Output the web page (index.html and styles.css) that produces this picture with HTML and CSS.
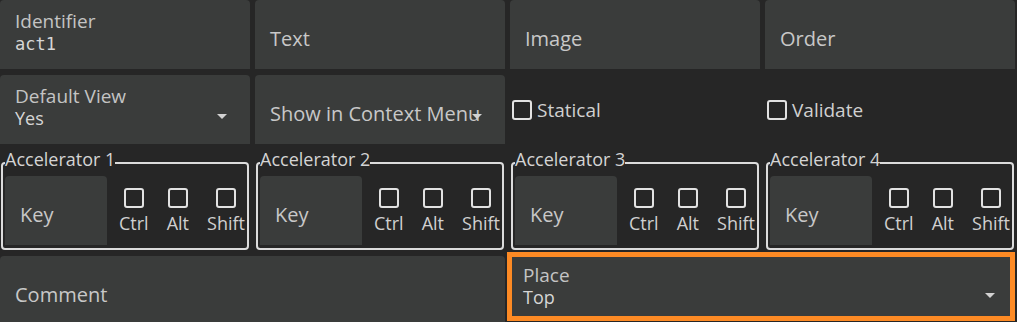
FILE: index.html
```html
<!DOCTYPE html>
<html>
<head>
  <link rel="stylesheet" href="styles.css">
</head>
<body>
<div class="form">
  <div class="field">
    <div class="label">Identifier</div>
    <div class="value"><span class="mono">act1</span></div>
  </div>
  <div class="field"><div class="placeholder">Text</div></div>
  <div class="field"><div class="placeholder">Image</div></div>
  <div class="field"><div class="placeholder">Order</div></div>

  <div class="field combo">
    <div class="label">Default View</div>
    <div class="value">Yes</div>
    <span class="arrow"></span>
  </div>
  <div class="field combo">
    <div class="placeholder">Show in Context Menu</div>
    <span class="arrow"></span>
  </div>
  <label class="check-row"><span class="box"></span>Statical</label>
  <label class="check-row"><span class="box"></span>Validate</label>

  <fieldset class="accel">
    <legend>Accelerator 1</legend>
    <div class="accel-body">
      <div class="key">Key</div>
      <div class="mods">
        <label class="mod"><span class="box"></span>Ctrl</label>
        <label class="mod"><span class="box"></span>Alt</label>
        <label class="mod"><span class="box"></span>Shift</label>
      </div>
    </div>
  </fieldset>
  <fieldset class="accel">
    <legend>Accelerator 2</legend>
    <div class="accel-body">
      <div class="key">Key</div>
      <div class="mods">
        <label class="mod"><span class="box"></span>Ctrl</label>
        <label class="mod"><span class="box"></span>Alt</label>
        <label class="mod"><span class="box"></span>Shift</label>
      </div>
    </div>
  </fieldset>
  <fieldset class="accel">
    <legend>Accelerator 3</legend>
    <div class="accel-body">
      <div class="key">Key</div>
      <div class="mods">
        <label class="mod"><span class="box"></span>Ctrl</label>
        <label class="mod"><span class="box"></span>Alt</label>
        <label class="mod"><span class="box"></span>Shift</label>
      </div>
    </div>
  </fieldset>
  <fieldset class="accel">
    <legend>Accelerator 4</legend>
    <div class="accel-body">
      <div class="key">Key</div>
      <div class="mods">
        <label class="mod"><span class="box"></span>Ctrl</label>
        <label class="mod"><span class="box"></span>Alt</label>
        <label class="mod"><span class="box"></span>Shift</label>
      </div>
    </div>
  </fieldset>

  <div class="field wide"><div class="placeholder">Comment</div></div>
  <div class="field combo wide place">
    <div class="label">Place</div>
    <div class="value">Top</div>
    <span class="arrow"></span>
  </div>
</div>
</body>
</html>
```

FILE: styles.css
```css
body {
  margin: 0;
  background: #262626;
  color: #cccccc;
  font-family: "Open Sans", Lato, sans-serif;
  overflow: hidden;
}

.form {
  display: grid;
  grid-template-columns: repeat(4, 250px);
  grid-template-rows: 69px 69px 100px 69px;
  column-gap: 5px;
  row-gap: 6px;
}

.field {
  position: relative;
  background: #3a3c3b;
  border-radius: 4px 4px 0 0;
  padding: 10px 15px 0 15px;
  overflow: hidden;
}

.field.wide {
  grid-column: span 2;
}

.label {
  font-size: 19px;
  line-height: 22px;
  color: #c4c4c4;
}

.value {
  font-size: 18px;
  line-height: 22px;
  color: #d6d6d6;
}

.mono {
  font-family: "DejaVu Sans Mono", monospace;
  font-size: 17px;
}

.placeholder {
  font-size: 20px;
  line-height: 24px;
  padding-top: 17px;
  white-space: nowrap;
  color: #c8c8c8;
}

/* dropdown triangle sits over the text */
.arrow {
  position: absolute;
  top: 39px;
  right: 23px;
  width: 0;
  height: 0;
  border-left: 5px solid transparent;
  border-right: 5px solid transparent;
  border-top: 5px solid #d2d2d2;
}

.place {
  margin: -4px 0 4px -3px;
  border: 5px solid #fd8a24;
  border-radius: 0;
  padding: 7px 11px 0 11px;
}

.place .arrow {
  top: 36px;
  right: 15px;
}

.box {
  display: inline-block;
  box-sizing: border-box;
  width: 20px;
  height: 20px;
  border: 2px solid #e2e2e2;
  border-radius: 3px;
}

.check-row {
  display: flex;
  align-items: center;
  gap: 5px;
  padding-left: 2px;
  font-size: 19px;
  color: #d0d0d0;
}

.accel {
  margin: 0 1px;
  min-width: 0;
  padding: 0 2px 3px 2px;
  border: 2px solid #dcdcdc;
  border-radius: 4px;
}

.accel legend {
  margin: 0;
  padding: 0 0 8px 0;
  font-size: 18px;
  line-height: 18px;
  color: #d4d4d4;
}

.accel-body {
  display: flex;
}

.key {
  width: 102px;
  height: 69px;
  box-sizing: border-box;
  padding: 27px 15px 0 15px;
  background: #3a3c3b;
  border-radius: 4px 4px 0 0;
  font-size: 20px;
  line-height: 24px;
  color: #c8c8c8;
}

.mods {
  flex: 1;
  display: flex;
  justify-content: space-between;
  padding: 12px 0 0 12px;
}

.mod {
  display: flex;
  flex-direction: column;
  align-items: center;
  gap: 5px;
  font-size: 18px;
  line-height: 20px;
  color: #d0d0d0;
}
```
